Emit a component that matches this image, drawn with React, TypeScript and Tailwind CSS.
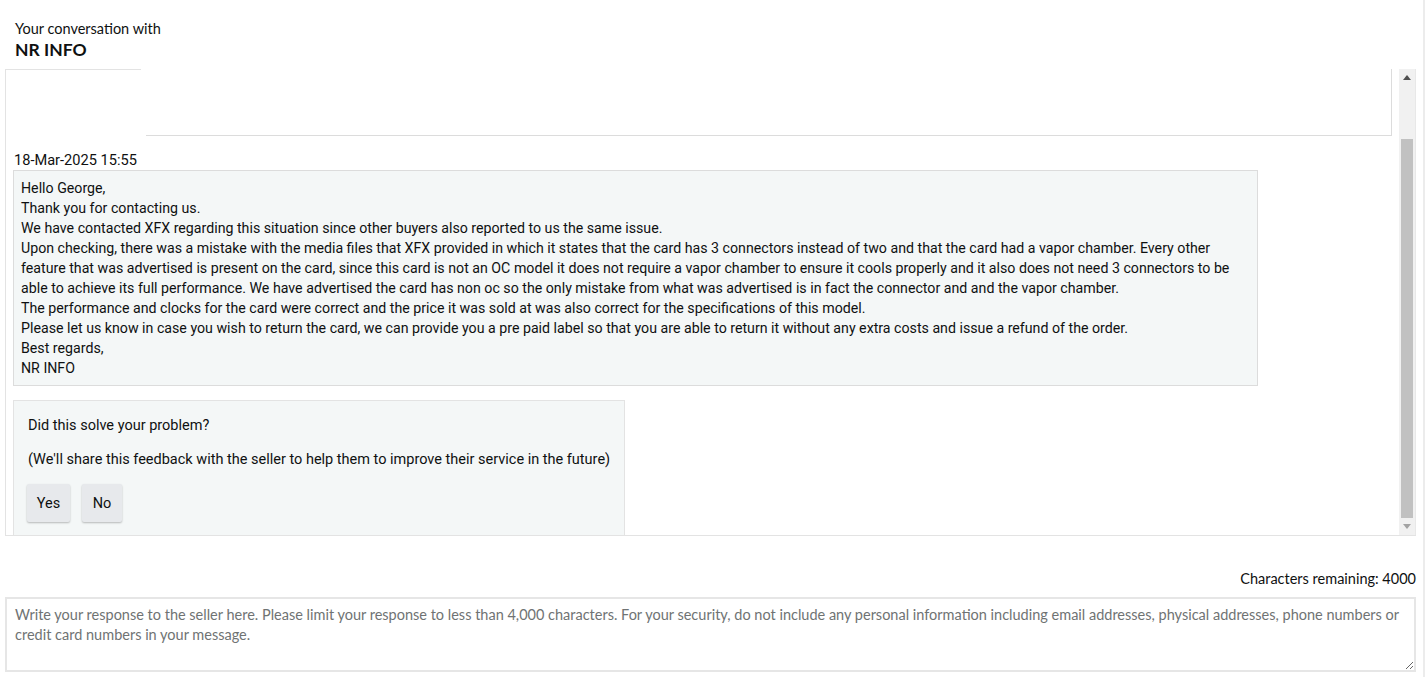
import React from "react";

const ember = { fontFamily: "Roboto, 'Liberation Sans', sans-serif" };
const segoe = { fontFamily: "Lato, 'Liberation Sans', sans-serif" };

const lines = [
  "Hello George,",
  "Thank you for contacting us.",
  "We have contacted XFX regarding this situation since other buyers also reported to us the same issue.",
  "Upon checking, there was a mistake with the media files that XFX provided in which it states that the card has 3 connectors instead of two and that the card had a vapor chamber. Every other feature that was advertised is present on the card, since this card is not an OC model it does not require a vapor chamber to ensure it cools properly and it also does not need 3 connectors to be able to achieve its full performance. We have advertised the card has non oc so the only mistake from what was advertised is in fact the connector and and the vapor chamber.",
  "The performance and clocks for the card were correct and the price it was sold at was also correct for the specifications of this model.",
  "Please let us know in case you wish to return the card, we can provide you a pre paid label so that you are able to return it without any extra costs and issue a refund of the order.",
  "Best regards,",
  "NR INFO",
];

export default function App() {
  return (
    <div className="flex w-[1428px] h-[677px] bg-white text-[#0f1111] overflow-hidden">
      <div className="w-[1423px] pl-[5px] pr-[7px] flex flex-col">
        <div className="pl-[10px] pt-[19px] h-[69px]" style={segoe}>
          <div className="text-[14.5px] leading-[20px]">Your conversation with</div>
          <div className="text-[17.5px] leading-[22px] font-bold">NR INFO</div>
        </div>

        <div className="flex h-[467px] border-b border-[#e3e3e3]">
          <div className="flex-1 border-l border-[#e3e3e3] overflow-hidden flex flex-col" style={ember}>
            <div className="flex h-[67px] shrink-0">
              <div className="w-[135px] border-t border-[#e3e3e3]" />
              <div className="flex-1 ml-[5px] mr-[7px] border-r border-b border-[#dcdcdc]" />
            </div>
            <div className="pl-[8px] mt-[15px] text-[14.6px] leading-[19px]">18-Mar-2025 15:55</div>
            <div className="ml-[7px] w-[1245px] border border-[#dcdcdc] bg-[#f4f7f7] pl-[7px] pr-[8px] py-[7px] text-[14.2px] leading-[20px] shrink-0">
              {lines.map((l, i) => (
                <div key={i}>{l}</div>
              ))}
            </div>
            <div className="ml-[7px] mt-[14px] w-[612px] border border-[#e3e3e3] bg-[#f4f7f7] pl-[14px] pt-[15px] pb-[14px] text-[14.5px] leading-[20px] shrink-0">
              <div>Did this solve your problem?</div>
              <div className="mt-[14px] whitespace-nowrap">(We'll share this feedback with the seller to help them to improve their service in the future)</div>
              <div className="mt-[14px] flex gap-[12px] -ml-[1px]">
                <button className="h-[38px] w-[43px] bg-[#e7e9ec] rounded-[2px] shadow-[0_1px_2px_rgba(0,0,0,0.25)] text-[14.5px] pt-[1px]">Yes</button>
                <button className="h-[38px] w-[40px] bg-[#e7e9ec] rounded-[2px] shadow-[0_1px_2px_rgba(0,0,0,0.25)] text-[14.5px] pt-[1px]">No</button>
              </div>
            </div>
          </div>
          <div className="w-[17px] bg-[#f1f1f1] border-r border-[#e8e8e8] flex flex-col">
            <div className="h-[17px] flex items-center justify-center">
              <svg width="8" height="5" viewBox="0 0 8 5"><path d="M4 0 L8 5 L0 5 Z" fill="#505050" /></svg>
            </div>
            <div className="h-[53px]" />
            <div className="h-[379px] mx-[2px] bg-[#c1c1c1]" />
            <div className="flex-1 flex items-center justify-center">
              <svg width="8" height="5" viewBox="0 0 8 5"><path d="M0 0 L8 0 L4 5 Z" fill="#a3a3a3" /></svg>
            </div>
          </div>
        </div>

        <div className="mt-[33px] text-right text-[14.5px] leading-[20px]" style={segoe}>Characters remaining: 4000</div>
        <textarea
          className="mt-[8px] h-[75px] w-full border-2 border-[#e6e6e6] px-[8px] py-[6px] text-[14.5px] leading-[20px] placeholder:text-[#6f7373] outline-none"
          style={segoe}
          placeholder="Write your response to the seller here. Please limit your response to less than 4,000 characters. For your security, do not include any personal information including email addresses, physical addresses, phone numbers or credit card numbers in your message."
        />
      </div>
      <div className="w-[2px] bg-[#ececec]" />
      <div className="w-[3px]" />
    </div>
  );
}
